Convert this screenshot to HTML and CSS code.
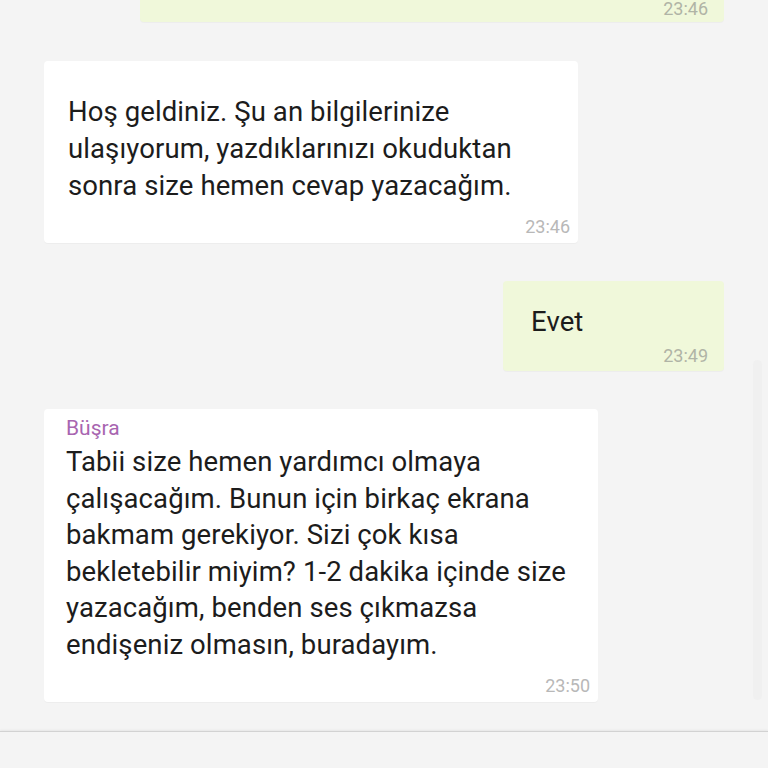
FILE: index.html
```html
<!DOCTYPE html>
<html lang="tr">
<head>
<meta charset="utf-8">
<title>Sohbet</title>
<link rel="stylesheet" href="styles.css">
</head>
<body>
<div class="screen">
  <div class="chat">
    <div class="bubble out first">
      <div class="spacer"></div>
      <div class="time">23:46</div>
    </div>
    <div class="bubble in welcome">
      <div class="text">Hoş geldiniz. Şu an bilgilerinize<br>ulaşıyorum, yazdıklarınızı okuduktan<br>sonra size hemen cevap yazacağım.</div>
      <div class="time">23:46</div>
    </div>
    <div class="bubble out evet">
      <div class="text">Evet</div>
      <div class="time">23:49</div>
    </div>
    <div class="bubble in agent">
      <div class="name">Büşra</div>
      <div class="text">Tabii size hemen yardımcı olmaya<br>çalışacağım. Bunun için birkaç ekrana<br>bakmam gerekiyor. Sizi çok kısa<br>bekletebilir miyim? 1-2 dakika içinde size<br>yazacağım, benden ses çıkmazsa<br>endişeniz olmasın, buradayım.</div>
      <div class="time">23:50</div>
    </div>
  </div>
  <div class="footer"></div>
  <div class="scrollbar"></div>
</div>
</body>
</html>
```

FILE: styles.css
```css
html, body {
  margin: 0;
  padding: 0;
  background: #f4f4f4;
}
body {
  font-family: Roboto, "Noto Sans", sans-serif;
  color: #1c1c1c;
  width: 768px;
  height: 768px;
  overflow: hidden;
}
.screen {
  position: relative;
  width: 768px;
  height: 768px;
  display: flex;
  flex-direction: column;
}
.chat {
  display: flex;
  flex-direction: column;
  gap: 38px;
  margin-top: -41px;
}
.bubble {
  box-sizing: border-box;
  border-radius: 4px;
  box-shadow: 0 1px 1px rgba(0, 0, 0, 0.03);
}
.bubble.in {
  background: #ffffff;
  align-self: flex-start;
  margin-left: 44px;
}
.bubble.out {
  background: #f0f8da;
  align-self: flex-end;
  margin-right: 44px;
}
.text {
  font-size: 27.5px;
  letter-spacing: 0.1px;
  line-height: 37px;
  white-space: nowrap;
}
.time {
  font-size: 18px;
  line-height: 20px;
  text-align: right;
  color: #b8b8b8;
}
.bubble.out .time {
  color: #b0b4a6;
}
.first {
  width: 584px;
  padding: 0 16px 3px 24px;
  margin-bottom: 1px;
}
.spacer {
  height: 40px;
}
.welcome {
  width: 534px;
  padding: 32px 8px 6px 24px;
}
.welcome .time {
  margin-top: 13px;
}
.evet {
  width: 221px;
  padding: 22px 16px 5px 28px;
}
.evet .time {
  margin-top: 6px;
}
.agent {
  width: 554px;
  padding: 7px 8px 6px 22px;
}
.agent .name {
  font-size: 21px;
  line-height: 24px;
  color: #a865b0;
}
.agent .text {
  margin-top: 4px;
  line-height: 36.6px;
}
.agent .time {
  margin-top: 12px;
}
.footer {
  margin-top: 29px;
  flex: 1;
  border-top: 1px solid #d2d2d2;
  box-shadow: 0 -1px 2px rgba(0, 0, 0, 0.06);
  background: #f4f4f4;
}
.scrollbar {
  position: absolute;
  right: 6px;
  top: 360px;
  width: 9px;
  height: 340px;
  border-radius: 5px;
  background: #f0f0f0;
}
```
